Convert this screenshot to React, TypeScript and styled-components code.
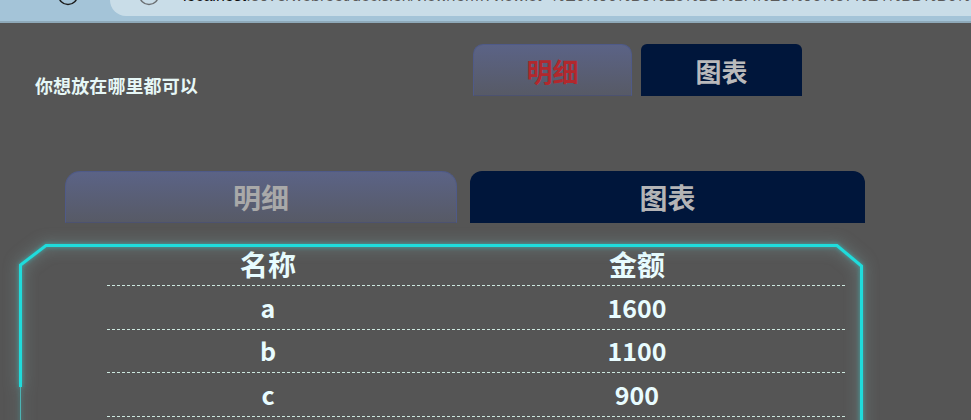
import React from "react";
import styled, { createGlobalStyle } from "styled-components";

const GlobalStyle = createGlobalStyle`
  html, body {
    margin: 0;
    padding: 0;
    background: #555555;
  }
  body {
    font-family: "Noto Sans CJK SC", "Noto Sans", sans-serif;
    overflow: hidden;
  }
`;

const Page = styled.div`
  width: 971px;
  height: 420px;
  background: #555555;
  overflow: hidden;
`;

/* browser chrome strip at the very top */
const BrowserBar = styled.div`
  height: 21px;
  background: #a4c4d8;
  border-bottom: 2px solid #8ea9b9;
  display: flex;
  align-items: flex-start;
`;

const NavArea = styled.div`
  width: 110px;
  flex: none;
  padding-left: 57px;
  box-sizing: border-box;
  display: flex;
`;

const AddressPill = styled.div`
  flex: 1;
  min-width: 0;
  height: 16px;
  background: #c9dde8;
  border-bottom-left-radius: 16px;
  padding-left: 28px;
  display: flex;
  align-items: flex-start;
  overflow: hidden;

  svg {
    flex: none;
  }
`;

const Url = styled.div`
  flex: none;
  margin-left: 23px;
  margin-top: -12px;
  font-family: "Liberation Sans", Arial, sans-serif;
  font-size: 16px;
  line-height: 16px;
  white-space: nowrap;
  color: #5a5a5a;

  b {
    font-weight: 400;
    color: #111;
  }
`;

const TopRow = styled.div`
  display: grid;
  grid-template-columns: 438px auto;
  padding: 21px 0 0 35px;
  align-items: end;
`;

const Caption = styled.div`
  font-size: 18px;
  font-weight: 700;
  line-height: 18px;
  color: #e6f7f6;
  margin-bottom: 2px;
  letter-spacing: 0.1px;
`;

const TabStrip = styled.div<{ $gap: number }>`
  display: flex;
  gap: ${(p) => p.$gap}px;
`;

type TabProps = {
  $dark?: boolean;
  $width: number;
  $radius: number;
  $color: string;
  $font: number;
};

const Tab = styled.div<TabProps>`
  box-sizing: border-box;
  width: ${(p) => p.$width}px;
  height: 52px;
  display: flex;
  align-items: center;
  justify-content: center;
  font-size: ${(p) => p.$font}px;
  font-weight: 700;
  color: ${(p) => p.$color};
  border-radius: ${(p) => p.$radius}px ${(p) => p.$radius}px 0 0;
  background: ${(p) =>
    p.$dark ? "#00163b" : "linear-gradient(#5b6386, #575a66)"};
  border: ${(p) => (p.$dark ? "none" : "1px solid #4f5a88")};
  border-bottom-color: #4c5270;
`;

const BigTabRow = styled(TabStrip)`
  margin: 75px 0 0 65px;
`;

const Panel = styled.div`
  position: relative;
  margin: 20px 0 0 19px;
  width: 845px;
  height: 190px;
`;

const Frame = styled.svg`
  position: absolute;
  left: 0;
  top: 0;
  overflow: visible;
  pointer-events: none;
  filter: drop-shadow(0 0 2px rgba(40, 220, 220, 0.6))
    drop-shadow(0 0 7px rgba(140, 190, 190, 0.6));
`;

const DataTable = styled.div`
  margin-left: 88px;
  width: 738px;
`;

const Row = styled.div<{ $head?: boolean }>`
  display: grid;
  grid-template-columns: 322px 416px;
  height: ${(p) => (p.$head ? 42 : 42.5)}px;
  border-bottom: 1px dashed #cde8df;
  font-size: ${(p) => (p.$head ? 28 : 25)}px;
  font-weight: 700;
  color: #e8fcff;
`;

const Cell = styled.div`
  display: flex;
  align-items: center;
  justify-content: center;
  line-height: 1;
`;

const rows = [
  { name: "a", amount: 1600 },
  { name: "b", amount: 1100 },
  { name: "c", amount: 900 },
];

function CircleStub({ color }: { color: string }) {
  return (
    <svg width="22" height="6" viewBox="0 0 22 6">
      <circle cx="11" cy="-5" r="9.5" fill="none" stroke={color} strokeWidth="1.4" />
    </svg>
  );
}

export default function App() {
  return (
    <Page>
      <GlobalStyle />
      <BrowserBar>
        <NavArea>
          <CircleStub color="#1a1a1a" />
        </NavArea>
        <AddressPill>
          <CircleStub color="#6b6f72" />
          <Url>
            <b>localhost</b>:8075/webroot/decision/view/form?viewlet=%E6%96%B0%E5%BB%BA%E6%96%87%E4%BB%B6%E5%A4%B9%2Ftab%E5%88%87%E6%8D%A2.frm
          </Url>
        </AddressPill>
      </BrowserBar>

      <TopRow>
        <Caption>你想放在哪里都可以</Caption>
        <TabStrip $gap={9}>
          <Tab $width={159} $radius={10} $color="#b2282d" $font={26}>
            明细
          </Tab>
          <Tab $dark $width={161} $radius={6} $color="#b9b9bb" $font={26}>
            图表
          </Tab>
        </TabStrip>
      </TopRow>

      <BigTabRow $gap={13}>
        <Tab $width={392} $radius={15} $color="#a9a9a9" $font={28}>
          明细
        </Tab>
        <Tab $dark $width={395} $radius={12} $color="#b4b4b6" $font={28}>
          图表
        </Tab>
      </BigTabRow>

      <Panel>
        <Frame width="845" height="190" viewBox="0 0 845 190">
          <path
            d="M1.5 144 L1.5 22 L27 2.5 L818 2.5 L842.5 23 L842.5 200"
            fill="none"
            stroke="#1fdcdc"
            strokeWidth="3"
            strokeLinejoin="miter"
          />
          <line x1="1.5" y1="144" x2="1.5" y2="200" stroke="#4db4b4" strokeWidth="1" />
        </Frame>
        <DataTable>
          <Row $head>
            <Cell>名称</Cell>
            <Cell>金额</Cell>
          </Row>
          {rows.map((r) => (
            <Row key={r.name}>
              <Cell>{r.name}</Cell>
              <Cell>{r.amount}</Cell>
            </Row>
          ))}
        </DataTable>
      </Panel>
    </Page>
  );
}
